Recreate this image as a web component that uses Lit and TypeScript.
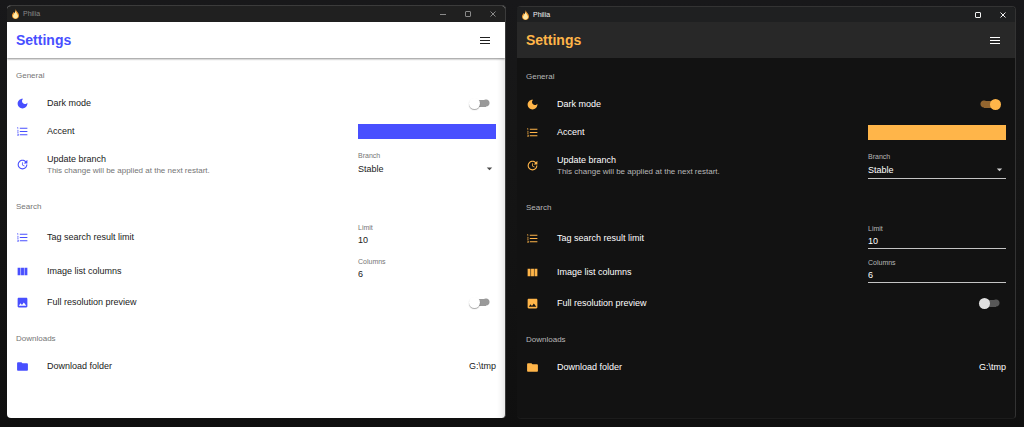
import { LitElement, html, css, svg, nothing } from "lit";
import { customElement, property } from "lit/decorators.js";

const ICONS: Record<string, string> = {
  moon: "M12 3c-4.97 0-9 4.03-9 9s4.03 9 9 9 9-4.03 9-9c0-.46-.04-.92-.1-1.36-.98 1.37-2.58 2.26-4.4 2.26-2.98 0-5.4-2.42-5.4-5.4 0-1.81.89-3.42 2.26-4.4-.44-.06-.9-.1-1.36-.1z",
  list: "M2 17h2v.5H3v1h1v.5H2v1h3v-4H2v1zm1-9h1V4H2v1h1v3zm-1 3h1.8L2 13.1v.9h3v-1H3.2L5 10.9V10H2v1zm5-6v2h14V5H7zm0 14h14v-2H7v2zm0-6h14v-2H7v2z",
  update:
    "M21 10.12h-6.78l2.74-2.82c-2.73-2.7-7.15-2.8-9.88-.1-2.73 2.71-2.73 7.08 0 9.79s7.15 2.71 9.88 0C18.32 15.65 19 14.08 19 12.1h2c0 1.98-.88 4.55-2.64 6.29-3.51 3.48-9.21 3.48-12.72 0-3.5-3.47-3.53-9.11-.02-12.58s9.14-3.47 12.65 0L21 3v7.12zM12.5 8v4.25l3.5 2.08-.72 1.21L11 13V8h1.5z",
  columns: "M14.67 5v14H9.33V5h5.34zm1 14H21V5h-5.33v14zm-7.34 0V5H3v14h5.33z",
  image:
    "M21 19V5c0-1.1-.9-2-2-2H5c-1.1 0-2 .9-2 2v14c0 1.1.9 2 2 2h14c1.1 0 2-.9 2-2zM8.5 13.5l2.5 3.01L14.5 12l4.5 6H5l3.5-4.5z",
  folder: "M10 4H4c-1.1 0-1.99.9-1.99 2L2 18c0 1.1.9 2 2 2h16c1.1 0 2-.9 2-2V8c0-1.1-.9-2-2-2h-8l-2-2z",
  arrow: "M7 10l5 5 5-5z",
};

const icon = (name: string) =>
  html`<svg class="icon" viewBox="0 0 24 24" aria-hidden="true">${svg`<path d=${ICONS[name]} />`}</svg>`;

@customElement("settings-window")
export class SettingsWindow extends LitElement {
  @property({ type: Boolean, reflect: true }) dark = false;

  static styles = css`
    :host {
      --accent: #484fff;
      --paper: #ffffff;
      --bar: #ffffff;
      --title-bar: #202020;
      --title-text: #8a8a8a;
      --text: #212121;
      --muted: #757575;
      --line: transparent;
      --track: #9a9a9a;
      --track-on: #8f95ff;
      --thumb: #ffffff;
      --thumb-shadow: 0 1px 1px rgba(0, 0, 0, 0.35);
      --edge: #3b3b3b;
      display: flex;
      flex-direction: column;
      overflow: hidden;
      box-sizing: border-box;
      border-top: 1px solid var(--edge);
      border-right: 1px solid var(--edge);
      border-radius: 4px;
      background: var(--paper);
      color: var(--text);
      font: 9px/12px "Liberation Sans", Arial, sans-serif;
    }
    :host([dark]) {
      --accent: #ffb549;
      --paper: #121212;
      --bar: #282828;
      --title-bar: #1f2021;
      --title-text: #f2f2f2;
      --text: #ffffff;
      --muted: #b8b8b8;
      --line: #c4c4c4;
      --track: #575757;
      --track-on: #93652f;
      --thumb: #e0e0e0;
      --thumb-shadow: none;
      --edge: #333333;
      border-bottom: 1px solid #1c1c1c;
    }
    button,
    input,
    select {
      margin: 0;
      padding: 0;
      border: 0;
      border-radius: 0;
      background: none;
      color: inherit;
      font: inherit;
    }
    .icon {
      display: block;
      flex: none;
      width: 13px;
      height: 13px;
      fill: currentColor;
    }
    .title-bar {
      display: flex;
      align-items: center;
      height: 16px;
      padding-left: 4px;
      background: var(--title-bar);
      color: var(--title-text);
      font-size: 7px;
    }
    :host([dark]) .title-bar {
      height: 15px;
    }
    .flame {
      width: 9px;
      height: 10px;
      margin-right: 3px;
    }
    .app-name {
      flex: 1;
    }
    .window-button {
      display: grid;
      place-items: center;
      width: 25px;
      height: 16px;
    }
    .glyph {
      width: 6px;
      height: 6px;
      fill: none;
      stroke: currentColor;
    }
    .app-bar {
      display: flex;
      align-items: center;
      justify-content: space-between;
      height: 36px;
      padding: 0 9px;
      background: var(--bar);
      box-shadow: 0 1px 2px rgba(0, 0, 0, 0.45);
      z-index: 1;
    }
    :host([dark]) .app-bar {
      box-shadow: none;
      margin-bottom: 1px;
    }
    .page-title {
      margin: 0;
      color: var(--accent);
      font-size: 14px;
      line-height: 20px;
    }
    .menu-button {
      padding: 4px;
    }
    .menu-icon {
      display: block;
      width: 14px;
      height: 14px;
      fill: currentColor;
    }
    .content {
      display: flex;
      flex: 1;
      flex-direction: column;
      gap: 9px;
      padding: 4px 9px 9px;
    }
    :host(:not([dark])) .content {
      box-shadow: inset -8px 0 7px -6px rgba(0, 0, 0, 0.12);
    }
    .section-title {
      margin: 0;
      color: var(--muted);
      font-size: 8px;
      font-weight: normal;
      line-height: 27px;
    }
    .row {
      display: flex;
      align-items: center;
      gap: 18px;
      min-height: 28px;
    }
    .row.field-row {
      min-height: 34px;
    }
    .row.tall {
      min-height: 39px;
    }
    .row > .icon {
      color: var(--accent);
    }
    .text {
      display: flex;
      flex: 1;
      flex-direction: column;
    }
    .hint {
      color: var(--muted);
      font-size: 8px;
    }
    .swatch {
      width: 28%;
      max-width: 240px;
      min-width: 138px;
      height: 15px;
      background: var(--accent);
    }
    .field {
      display: flex;
      flex-direction: column;
      width: 28%;
      max-width: 240px;
      min-width: 138px;
    }
    .field-row .field {
      padding-bottom: 3px;
    }
    .field-label {
      color: var(--muted);
      font-size: 7px;
      line-height: 9px;
    }
    .control {
      display: grid;
      align-items: center;
      border-bottom: 1px solid var(--line);
    }
    .control > * {
      grid-area: 1 / 1;
    }
    .input {
      appearance: none;
      width: 100%;
      height: 15px;
      outline: none;
    }
    .select {
      height: 17px;
    }
    .select option {
      color: #212121;
    }
    .control .icon {
      justify-self: end;
      pointer-events: none;
      opacity: 0.8;
    }
    .switch {
      appearance: none;
      display: flex;
      align-items: center;
      width: 22px;
      height: 11px;
      margin-right: 5px;
      background: linear-gradient(var(--track), var(--track)) center / 12px 7px no-repeat,
        radial-gradient(circle at center, var(--track) 3px, transparent 4px) 13px center / 8px 8px no-repeat;
    }
    .switch::before {
      content: "";
      width: 11px;
      height: 11px;
      border-radius: 50%;
      background: var(--thumb);
      box-shadow: var(--thumb-shadow);
    }
    .switch:checked {
      justify-content: flex-end;
      background: linear-gradient(var(--track-on), var(--track-on)) center / 12px 7px no-repeat,
        radial-gradient(circle at center, var(--track-on) 3px, transparent 4px) 1px center / 8px 8px no-repeat;
    }
    .switch:checked::before {
      background: var(--accent);
    }
  `;

  private renderSwitch(id: string, name: string, label: string, on: boolean) {
    return html`<div class="row">
      ${icon(name)}
      <label class="text" for=${id}>${label}</label>
      <input class="switch" id=${id} type="checkbox" role="switch" .checked=${on} />
    </div>`;
  }

  private renderNumber(id: string, name: string, title: string, label: string, value: string) {
    return html`<div class="row field-row">
      ${icon(name)}
      <span class="text">${title}</span>
      <div class="field">
        <label class="field-label" for=${id}>${label}</label>
        <div class="control">
          <input class="input" id=${id} type="text" inputmode="numeric" .value=${value} />
        </div>
      </div>
    </div>`;
  }

  render() {
    return html`
      <div class="title-bar">
        <svg class="flame" viewBox="0 0 18 20" aria-hidden="true">
          <path fill="#f29a2e" d="M9 0c1 4 7 7 7 13 0 4-3 7-7 7s-7-3-7-7c0-3 2-4 3-7 1 1 1 2 2 2 2-2 2-5 2-8z" />
          <path fill="#ffe9a8" d="M9 4c1 4 5 6 5 10 0 3-2 5-5 5s-5-2-5-5c0-2 4-6 5-10z" />
        </svg>
        <span class="app-name">Philia</span>
        ${this.dark
          ? nothing
          : html`<button class="window-button" aria-label="Minimize">
              <svg class="glyph" viewBox="0 0 6 6"><path d="M0 3.5h6" /></svg>
            </button>`}
        <button class="window-button" aria-label="Maximize">
          <svg class="glyph" viewBox="0 0 6 6"><rect x=".5" y=".5" width="5" height="5" rx=".5" /></svg>
        </button>
        <button class="window-button" aria-label="Close">
          <svg class="glyph" viewBox="0 0 6 6"><path d="M.5.5l5 5M5.5.5l-5 5" /></svg>
        </button>
      </div>
      <header class="app-bar">
        <h1 class="page-title">Settings</h1>
        <button class="menu-button" aria-label="Menu">
          <svg class="menu-icon" viewBox="0 0 14 14" aria-hidden="true">
            <path d="M2 4h10v1H2zM2 7h10v1H2zM2 10h10v1H2z" />
          </svg>
        </button>
      </header>
      <main class="content">
        <section>
          <h2 class="section-title">General</h2>
          ${this.renderSwitch("dark-mode", "moon", "Dark mode", this.dark)}
          <div class="row">
            ${icon("list")}
            <label class="text" for="accent">Accent</label>
            <button class="swatch" id="accent"></button>
          </div>
          <div class="row tall">
            ${icon("update")}
            <div class="text">
              <span>Update branch</span>
              <span class="hint">This change will be applied at the next restart.</span>
            </div>
            <div class="field">
              <label class="field-label" for="branch">Branch</label>
              <div class="control">
                <select class="input select" id="branch">
                  <option>Stable</option>
                </select>
                ${icon("arrow")}
              </div>
            </div>
          </div>
        </section>
        <section>
          <h2 class="section-title">Search</h2>
          ${this.renderNumber("limit", "list", "Tag search result limit", "Limit", "10")}
          ${this.renderNumber("columns", "columns", "Image list columns", "Columns", "6")}
          ${this.renderSwitch("preview", "image", "Full resolution preview", false)}
        </section>
        <section>
          <h2 class="section-title">Downloads</h2>
          <div class="row">
            ${icon("folder")}
            <label class="text" for="folder">Download folder</label>
            <button class="folder" id="folder">G:\\tmp</button>
          </div>
        </section>
      </main>
    `;
  }
}

@customElement("app-root")
export class AppRoot extends LitElement {
  static styles = css`
    :host {
      display: grid;
      grid-template-columns: 1fr 1fr;
      gap: 11px;
      box-sizing: border-box;
      min-height: 100vh;
      padding: 5px 8px 9px 7px;
      background: linear-gradient(#18181a, #161616 30%, #0f0f0f);
    }
    .lowered {
      margin-top: 1px;
      margin-bottom: -1px;
    }
  `;

  render() {
    return html`
      <settings-window></settings-window>
      <settings-window class="lowered" dark></settings-window>
    `;
  }
}
